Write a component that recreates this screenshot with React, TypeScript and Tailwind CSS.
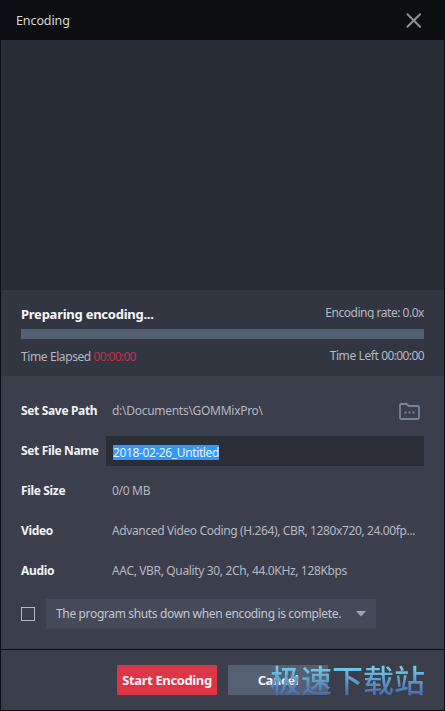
import { ReactNode } from "react";

interface RowProps {
  label: string;
  children: ReactNode;
}

function Row({ label, children }: RowProps) {
  return (
    <div className="flex h-10 items-center">
      <span className="w-[91px] shrink-0 text-[12px] font-bold tracking-[-0.34px] whitespace-nowrap text-[#f1f2f5]">{label}</span>
      {children}
    </div>
  );
}

function FolderIcon() {
  return (
    <svg width="21" height="17" viewBox="0 0 21 17" fill="none">
      <path d="M1 2.2Q1 1 2.2 1H7.6L9.6 3H18.8Q20 3 20 4.2V14.8Q20 16 18.8 16H2.2Q1 16 1 14.8Z" stroke="#768295" strokeWidth="1.8" />
      <path d="M5.5 8.5h2v2h-2zM9.5 8.5h2v2h-2zM13.5 8.5h2v2h-2z" fill="#768295" />
    </svg>
  );
}

export default function App() {
  return (
    <div className="relative flex h-[711px] w-[445px] flex-col overflow-hidden border-x border-b border-[#0b0d14] bg-[#3b3f4b] font-['Noto_Sans','Open_Sans',sans-serif] text-[12px] leading-4 text-[#b5b8c1]">
      {/* Title bar */}
      <header className="flex h-10 shrink-0 items-center justify-between bg-[#0d0e12] pr-[23px] pl-[15px]">
        <h1 className="pt-0.5 text-[12.5px] tracking-[-0.1px] text-[#d5d6d9]">Encoding</h1>
        <button aria-label="Close">
          <svg width="15" height="15" viewBox="0 0 15 15" stroke="#8f9093" strokeWidth="2" strokeLinecap="round">
            <path d="M1.5 1.2L14.1 13.8M14.1 1.2L1.5 13.8" />
          </svg>
        </button>
      </header>

      {/* Preview */}
      <div className="h-[250px] shrink-0 bg-[#272b33]" />

      {/* Progress */}
      <section className="h-[86px] shrink-0 bg-[#323640] px-5 pt-[15px]">
        <div className="flex h-[18px] justify-between whitespace-nowrap">
          <span className="pt-px text-[13px] font-bold tracking-[-0.25px] text-[#f7f8fa]">Preparing encoding...</span>
          <span className="h-3.5 overflow-hidden tracking-[-0.47px]">Encoding rate: 0.0x</span>
        </div>
        <div className="mt-1.5 h-2.5 bg-[#566073]" />
        <div className="mt-[9px] flex justify-between tracking-[-0.4px] whitespace-nowrap">
          <span className="pt-px">
            Time Elapsed <span className="tracking-[-0.68px] text-[#c5304c]">00:00:00</span>
          </span>
          <span>
            Time Left <span className="tracking-[-0.6px]">00:00:00</span>
          </span>
        </div>
      </section>

      {/* Settings */}
      <section className="h-[273px] shrink-0 px-5 pt-[15px]">
        <Row label="Set Save Path">
          <span className="grow tracking-[-0.28px]">d:\Documents\GOMMixPro\</span>
          <button aria-label="Browse" className="mr-1">
            <FolderIcon />
          </button>
        </Row>
        <Row label="Set File Name">
          <div className="-ml-1.5 flex h-[30px] grow items-center bg-[#2b2e37] pt-[3px] pl-[7px]">
            <span className="h-[15px] bg-[#3398fc] leading-[15px] tracking-[-0.38px] text-[#e8f3ff]">2018-02-26_Untitled</span>
          </div>
        </Row>
        <Row label="File Size">
          <span className="tracking-[-0.3px]">0/0 MB</span>
        </Row>
        <Row label="Video">
          <span className="tracking-[-0.38px] whitespace-nowrap">Advanced Video Coding (H.264), CBR, 1280x720, 24.00fp...</span>
        </Row>
        <Row label="Audio">
          <span className="tracking-[-0.35px]">AAC, VBR, Quality 30, 2Ch, 44.0KHz, 128Kbps</span>
        </Row>
        <div className="mt-2 flex h-[30px] items-center">
          <span className="size-3.5 border border-[#b3b7c2]" />
          <div className="ml-[11px] flex h-[30px] w-[330px] items-center justify-between bg-[#454a59] pr-2.5 pl-2.5">
            <span className="tracking-[-0.35px] whitespace-nowrap text-[#c3c6ce]">The program shuts down when encoding is complete.</span>
            <svg width="10" height="6" viewBox="0 0 10 6" fill="#a0a5b2">
              <path d="M0 0H10L5 5.5Z" />
            </svg>
          </div>
        </div>
      </section>

      {/* Actions */}
      <footer className="flex grow gap-[11px] border-t border-[#0b0d14] pt-[15px] pl-[116px] text-[13px] font-bold tracking-[-0.37px] text-[#f3f4f6]">
        <button className="h-[30px] w-[100px] rounded-[1px] bg-[#dc3545] whitespace-nowrap">Start Encoding</button>
        <button className="h-[30px] w-[100px] rounded-[1px] bg-[#566073]">Cancel</button>
      </footer>

      {/* Site watermark */}
      <div className="absolute top-[658px] left-[269px] bg-linear-to-b from-[#71d0ed] from-20% to-[#4c6cae] to-85% bg-clip-text font-['Noto_Sans_CJK_SC',sans-serif] text-[31px] leading-[42px] font-medium whitespace-nowrap text-transparent">
        极速下载站
      </div>
    </div>
  );
}
